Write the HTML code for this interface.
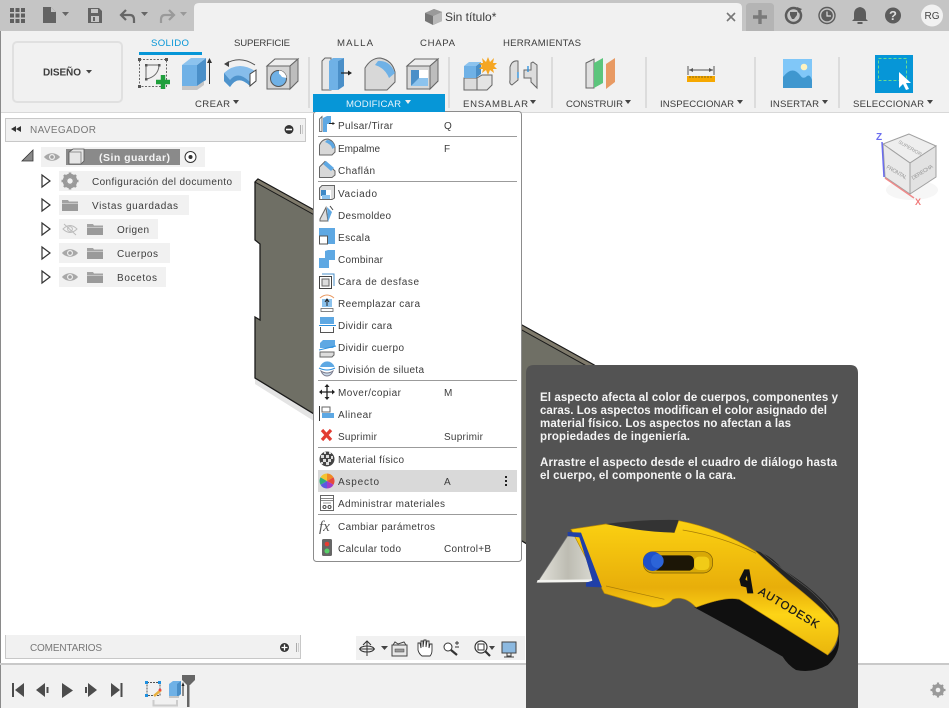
<!DOCTYPE html>
<html><head><meta charset="utf-8"><title>Sin título</title>
<style>
html,body{margin:0;padding:0;background:#fff;width:949px;height:708px;overflow:hidden}
svg{display:block;font-family:"Liberation Sans",sans-serif}
.t{font-size:10px;fill:#3c3c3c}
.r{font-size:9.6px;fill:#3c3c3c}
.w{font-size:11.5px;font-weight:bold;fill:#f4f4f4}
</style></head><body>
<svg width="949" height="708" viewBox="0 0 949 708" xmlns="http://www.w3.org/2000/svg">
<defs>
<linearGradient id="bl" x1="0" x2="1" y1="0" y2="0"><stop offset="0" stop-color="#e4e3dc"/><stop offset=".55" stop-color="#bdbcb2"/><stop offset="1" stop-color="#d8d8d0"/></linearGradient>
<linearGradient id="yl" x1="0" x2="0" y1="0" y2="1"><stop offset="0" stop-color="#fbd112"/><stop offset=".5" stop-color="#e8ae0a"/><stop offset=".7" stop-color="#fdd416"/><stop offset="1" stop-color="#e9b50c"/></linearGradient>
<symbol id="eye" viewBox="0 0 18 10" overflow="visible"><path d="M1 5C5 0 13 0 17 5C13 10 5 10 1 5Z" fill="#a8a8a8"/><circle cx="9" cy="5" r="3" fill="#f0f0f0"/><circle cx="9" cy="5" r="1.8" fill="#a0a0a0"/></symbol>
<symbol id="fold" viewBox="0 0 16 12" overflow="visible"><path d="M0 1H6L7 2.500H16V4H0Z" fill="#a3a3a3"/><path d="M0 4.500H16V12H0Z" fill="#9a9a9a"/></symbol>
<symbol id="tri" viewBox="0 0 10 14" overflow="visible"><path d="M1 1L9 7L1 13Z" fill="#fff" stroke="#333" stroke-width="1.200"/></symbol>
</defs>

<!-- base -->
<rect width="949" height="708" fill="#fff"/>
<rect x="0" y="0" width="1" height="708" fill="#8a8a8a"/>
<rect x="0" y="0" width="949" height="31" fill="#c5c5c5"/>
<path d="M194 31V8Q194 3 199 3H737Q742 3 742 8V31Z" fill="#f1f1f1"/>
<path d="M746 31V7Q746 3 750 3H770Q774 3 774 7V31Z" fill="#b4b4b4"/>
<rect x="1" y="31" width="948" height="81" fill="#f1f1f1"/>
<rect x="1" y="112" width="948" height="1" fill="#d8d8d8"/>

<!-- top bar icons -->
<g fill="#5f5f5f"><rect x="10" y="8" width="4" height="4"/><rect x="15.500" y="8" width="4" height="4"/><rect x="21" y="8" width="4" height="4"/><rect x="10" y="13.500" width="4" height="4"/><rect x="15.500" y="13.500" width="4" height="4"/><rect x="21" y="13.500" width="4" height="4"/><rect x="10" y="19" width="4" height="4"/><rect x="15.500" y="19" width="4" height="4"/><rect x="21" y="19" width="4" height="4"/></g>
<path d="M43 7H51L56 12V23H43Z" fill="#636363"/><path d="M51 7V12H56Z" fill="#c5c5c5"/>
<path d="M62 12H69L65.500 16Z" fill="#666"/>
<path d="M88 8H99L102 11V23H88Z" fill="#636363"/><rect x="91" y="9" width="7" height="4" fill="#c5c5c5"/><rect x="91" y="16" width="8" height="6" fill="#c5c5c5"/><rect x="93" y="17" width="2" height="4" fill="#636363"/>
<path d="M121 15H130Q134 15 134 20V23M126 10L121 15L126 20" fill="none" stroke="#666" stroke-width="2.200"/>
<path d="M141 12H148L144.500 16Z" fill="#666"/>
<path d="M174 15H165Q161 15 161 20V23M169 10L174 15L169 20" fill="none" stroke="#9a9a9a" stroke-width="2.200"/>
<path d="M180 12H187L183.500 16Z" fill="#999"/>
<!-- file title -->
<path d="M425 13L434 9L442 12V21L433 25L425 21Z" fill="#757575"/><path d="M425 13L433 16L442 12L434 9Z" fill="#9a9a9a"/><path d="M433 16V25L442 21V12Z" fill="#b9b9b9"/>
<text x="445" y="21" font-size="12" fill="#3c3c3c">Sin título*</text>
<path d="M727 13L735 21M735 13L727 21" stroke="#777" stroke-width="1.600"/>
<path d="M760 10V24M753 17H767" stroke="#7a7a7a" stroke-width="3.400"/>
<circle cx="793.500" cy="15.500" r="7.500" fill="none" stroke="#5c5c5c" stroke-width="2.500"/><path d="M790 12H797V15L794 19H792L790 15Z" fill="#5c5c5c"/><path d="M797 7L802 9L798 13Z" fill="#5c5c5c"/>
<circle cx="827" cy="15.500" r="8" fill="none" stroke="#5c5c5c" stroke-width="1.400"/><circle cx="827" cy="15.500" r="5.800" fill="#5c5c5c"/><path d="M827 11.500V16H831" fill="none" stroke="#ddd" stroke-width="1.200"/>
<path d="M860 7Q854 8 854 14V19L852 21H868L866 19V14Q866 8 860 7Z" fill="#5c5c5c"/><rect x="857.500" y="22" width="5" height="2" fill="#5c5c5c"/>
<circle cx="893" cy="15.500" r="8" fill="#5c5c5c"/><text x="893" y="20" font-size="13" font-weight="bold" fill="#ddd" text-anchor="middle">?</text>
<circle cx="932" cy="15.500" r="11" fill="#f1f1f1"/><text x="932" y="19" font-size="10" fill="#444" text-anchor="middle">RG</text>

<!-- Design button -->
<rect x="13" y="42" width="109" height="60" rx="4" fill="#f1f1f1" stroke="#e0e0e0" stroke-width="2"/>
<text x="43" y="75.500" font-size="10" font-weight="bold" fill="#3c3c3c" textLength="38">DISEÑO</text>
<path d="M86 70H92L89 73.500Z" fill="#444"/>

<!-- tabs -->
<text x="151" y="46" class="r" style="fill:#0696d7" textLength="38">SOLIDO</text>
<rect x="139" y="52" width="63" height="3" fill="#0696d7"/>
<text x="234" y="46" class="r" textLength="56">SUPERFICIE</text>
<text x="337" y="46" class="r" textLength="36">MALLA</text>
<text x="420" y="46" class="r" textLength="35">CHAPA</text>
<text x="503" y="46" class="r" textLength="78">HERRAMIENTAS</text>

<!-- separators -->
<g fill="#dcdcdc"><rect x="308" y="57" width="2" height="51"/><rect x="448" y="57" width="2" height="51"/><rect x="551" y="57" width="2" height="51"/><rect x="645" y="57" width="2" height="51"/><rect x="754" y="57" width="2" height="51"/><rect x="838" y="57" width="2" height="51"/></g>

<!-- section labels -->
<text x="195" y="107" class="r" textLength="35">CREAR</text><path d="M233 100H239L236 104Z" fill="#444"/>
<rect x="313" y="94" width="132" height="17" fill="#0696d7"/>
<text x="346" y="107" font-size="9.600" fill="#e8f4fb" textLength="55">MODIFICAR</text><path d="M405 100H411L408 104Z" fill="#eee"/>
<text x="463" y="107" class="r" textLength="65">ENSAMBLAR</text><path d="M530 100H536L533 104Z" fill="#444"/>
<text x="566" y="107" class="r" textLength="57">CONSTRUIR</text><path d="M625 100H631L628 104Z" fill="#444"/>
<text x="660" y="107" class="r" textLength="74">INSPECCIONAR</text><path d="M737 100H743L740 104Z" fill="#444"/>
<text x="770" y="107" class="r" textLength="49">INSERTAR</text><path d="M822 100H828L825 104Z" fill="#444"/>
<text x="853" y="107" class="r" textLength="71">SELECCIONAR</text><path d="M927 100H933L930 104Z" fill="#444"/>

<!-- CREAR icons -->
<rect x="139.500" y="59.500" width="27" height="27" fill="none" stroke="#666" stroke-dasharray="2 1.500"/>
<g fill="#555"><rect x="138" y="58" width="3" height="3"/><rect x="165" y="58" width="3" height="3"/><rect x="138" y="85" width="3" height="3"/><rect x="145" y="64" width="2.500" height="2.500"/><rect x="158" y="64" width="2.500" height="2.500"/><rect x="145" y="78" width="2.500" height="2.500"/></g>
<path d="M146 66V79M147 65H159M147 79Q158 76 159 66" fill="none" stroke="#666"/>
<path d="M156 82H170M163 75V89" stroke="#1f9f3c" stroke-width="4.500"/>
<path d="M182 65H197V86H182Z" fill="#6fb1e6"/><path d="M197 65L206 58V80L197 86Z" fill="#4a8fc8"/><path d="M182 65L191 58H206L197 65Z" fill="#8cc3ee"/>
<path d="M182 86H197L204 81V85L197 90H182Z" fill="#c6c6c6"/>
<path d="M209.500 84V61" stroke="#333"/><path d="M207 63L209.500 58L212 63Z" fill="#333"/>
<path d="M225 64Q240 55 255 65" fill="none" stroke="#555" stroke-width="1"/><path d="M224 64L229 61L229 67Z" fill="#444"/>
<path d="M224 73Q238 60 255 71L250 86Q238 74 230 87L224 81Z" fill="#86bdeb"/>
<path d="M224 73V81L230 87Q238 74 250 86V82Q238 70 230 80Z" fill="#4e93cc"/>
<path d="M250 74L256 70V81L250 86Z" fill="#fff" stroke="#444"/>
<path d="M267 66L275 59H298V81L290 89H267Z" fill="#d4d4d4" stroke="#666"/><path d="M267 66L275 59H298L290 66Z" fill="#eee" stroke="#666"/><path d="M290 66V89L298 81V59Z" fill="#bdbdbd" stroke="#666"/>
<circle cx="278.500" cy="78.500" r="8" fill="#6fb1e6" stroke="#555"/><path d="M279 70.500A8 8 0 0 1 286.500 78L282 77Q280 74 279 74Z" fill="#fff"/>

<!-- MODIFICAR icons -->
<path d="M322 61L325 58H331V90H322Z" fill="#e8e8e8" stroke="#666"/>
<path d="M329 61L333 58H344L338 61V90H329Z" fill="#6fb1e6"/><path d="M338 61L344 58V86L338 90Z" fill="#4a8fc8"/>
<path d="M341 73H349" stroke="#222" stroke-width="1.200"/><path d="M348 70.500L352 73L348 75.500Z" fill="#222"/>
<path d="M365 68Q371 58 380 58Q392 60 395 72V82L387 90H365Z" fill="#d8d8d8" stroke="#666"/>
<path d="M378 61Q390 60 395 73L389 78Q385 68 375 65Z" fill="#6fb1e6"/>
<path d="M407 66L415 59H438V81L430 89H407Z" fill="#d8d8d8" stroke="#666"/><path d="M407 66L415 59H438L430 66Z" fill="#eee" stroke="#666"/><path d="M430 66V89L438 81V59Z" fill="#bdbdbd" stroke="#666"/>
<rect x="411" y="70" width="17" height="16" fill="#fff"/><path d="M411 70H419V80L411 86Z" fill="#4a8fc8"/><path d="M419 78H428V86H411Z" fill="#8cc3ee"/>

<!-- ENSAMBLAR -->
<path d="M464 78H477V90H464Z" fill="#dcdcdc" stroke="#666"/><path d="M477 78L482 75H492V85L487 90H477Z" fill="#e4e4e4" stroke="#666"/>
<path d="M464 66H476V78H464Z" fill="#6fb1e6"/><path d="M476 66L481 62V74L476 78Z" fill="#4a8fc8"/><path d="M464 66L469 62H481L476 66Z" fill="#8cc3ee"/>
<path d="M488 57L490 62L494 58L493 63L497 63L494 66L497 69L493 69L494 73L490 70L488 75L486 70L482 73L483 69L479 69L482 66L479 63L483 63L482 58L486 62Z" fill="#f5a623"/>
<path d="M510 67Q512 60 518 61V80L512 85Q509 84 510 80Z" fill="#ddd" stroke="#666"/>
<path d="M533 62L537 65V88L531 82V78H524V70H531V63Z" fill="#ddd" stroke="#666"/>
<path d="M518 72V78M528 66V72" stroke="#2a8fdd" stroke-width="1.300"/>

<!-- CONSTRUIR -->
<path d="M586 63L594 59V88H586Z" fill="#e0e0e0" stroke="#666"/>
<path d="M594 63L603 58V83L594 88Z" fill="#5cc57c"/>
<path d="M606 64L615 58V82L606 89Z" fill="#e89a63"/>

<!-- INSPECCIONAR -->
<path d="M688 66V75M714 66V75" stroke="#555"/><path d="M689 70H713" stroke="#555"/><path d="M689 70L693 68V72ZM713 70L709 68V72Z" fill="#555"/>
<rect x="687" y="76" width="28" height="6" fill="#f6a800"/>
<path d="M690 76V78M693 76V78M696 76V78M699 76V78M702 76V78M705 76V78M708 76V78M711 76V78" stroke="#8a6a10"/>

<!-- INSERTAR -->
<rect x="783" y="59" width="29" height="29" fill="#80c7f8"/>
<circle cx="804" cy="67" r="3.300" fill="#fdf3c0"/>
<path d="M783 88V77Q792 65 800 75Q803 80 807 76Q810 74 812 80V88Z" fill="#3f97cf"/>

<!-- SELECCIONAR -->
<rect x="875" y="55" width="38" height="38" fill="#0696d7"/>
<rect x="878.500" y="58.500" width="28" height="22" fill="none" stroke="#69dd90" stroke-dasharray="3 2"/>
<path d="M899 72V88L903 84L906 90L909 89L906 83L911 83Z" fill="#fff"/>

<!-- Geometry -->
<path d="M255 378L522 541V552L255 384Z" fill="#e4e4e4"/>
<path d="M258 179L255 182V240L260 244V320L255 317V378L540 552L620 400L594 365Z" fill="#6f6f65" stroke="#1a1a1a" stroke-width="1.300"/>
<path d="M258 179L255 182L594 370L596 366Z" fill="#7f7a6b" stroke="#1a1a1a" stroke-width="1"/>

<!-- Navigator -->
<rect x="5.500" y="118.500" width="300" height="23" fill="#f1f1f1" stroke="#c8c8c8"/>
<path d="M11 129L16 126V132ZM16 129L21 126V132Z" fill="#333"/>
<text x="30" y="133" font-size="10" fill="#777" textLength="66">NAVEGADOR</text>
<circle cx="289" cy="129.500" r="4.500" fill="#333"/><rect x="286" y="128.700" width="6" height="1.600" fill="#fff"/>
<rect x="300" y="125" width="1" height="9" fill="#aaa"/><rect x="302" y="125" width="1" height="9" fill="#ccc"/>

<path d="M22 161H33V150Z" fill="#8a8a8a"/><path d="M33 150L22 161H33Z" fill="none" stroke="#333" stroke-width=".8"/>
<rect x="41" y="147" width="164" height="20" fill="#f1f1f1"/>
<rect x="66" y="149" width="114" height="16" fill="#8a8a8a"/>
<use href="#eye" x="43" y="152" width="18" height="10"/>
<path d="M69 152L73 149H84V161L81 164H69Z" fill="#e6e6e6" stroke="#555" stroke-width=".8"/><path d="M69 152H81V164" fill="none" stroke="#777" stroke-width=".8"/>
<text x="99" y="161" font-size="10.500" font-weight="bold" fill="#f4f4f4" textLength="71">(Sin guardar)</text>
<circle cx="190.500" cy="157" r="5.500" fill="#fff" stroke="#333"/><circle cx="190.500" cy="157" r="2" fill="#333"/>

<rect x="59" y="171" width="182" height="20" fill="#f1f1f1"/>
<rect x="59" y="195" width="130" height="20" fill="#f1f1f1"/>
<rect x="59" y="219" width="99" height="20" fill="#f1f1f1"/>
<rect x="59" y="243" width="111" height="20" fill="#f1f1f1"/>
<rect x="59" y="267" width="107" height="20" fill="#f1f1f1"/>
<use href="#tri" x="41" y="174" width="10" height="14"/>
<use href="#tri" x="41" y="198" width="10" height="14"/>
<use href="#tri" x="41" y="222" width="10" height="14"/>
<use href="#tri" x="41" y="246" width="10" height="14"/>
<use href="#tri" x="41" y="270" width="10" height="14"/>
<circle cx="70" cy="181" r="5.500" fill="none" stroke="#9a9a9a" stroke-width="3.500"/>
<path d="M70 172.500V189.500M61.500 181H78.500M64 175L76 187M76 175L64 187" stroke="#9a9a9a" stroke-width="2.600"/>
<circle cx="70" cy="181" r="2.700" fill="#f1f1f1"/>
<use href="#fold" x="62" y="199" width="16" height="12"/>
<text x="92" y="185" class="t" textLength="140">Configuración del documento</text>
<text x="92" y="209" class="t" textLength="86">Vistas guardadas</text>
<path d="M63 229Q70 222 77 229Q70 236 63 229Z" fill="none" stroke="#bbb"/><circle cx="70" cy="229" r="2.400" fill="none" stroke="#bbb"/><path d="M64 224L76 235" stroke="#bbb"/>
<use href="#fold" x="87" y="223" width="16" height="12"/>
<text x="117" y="233" class="t" textLength="32">Origen</text>
<use href="#eye" x="61" y="248" width="18" height="10"/><use href="#fold" x="87" y="247" width="16" height="12"/>
<text x="117" y="257" class="t" textLength="41">Cuerpos</text>
<use href="#eye" x="61" y="272" width="18" height="10"/><use href="#fold" x="87" y="271" width="16" height="12"/>
<text x="117" y="281" class="t" textLength="40">Bocetos</text>

<!-- View cube -->
<ellipse cx="912" cy="190" rx="26" ry="10" fill="#f6f6f6"/>
<path d="M909 134L883 144L910 163L936 146Z" fill="#eee" stroke="#a0a0a0"/>
<path d="M883 144L885 177L910 194V163Z" fill="#e9e9e9" stroke="#a0a0a0"/>
<path d="M910 163V194L936 177V146Z" fill="#e2e2e2" stroke="#a0a0a0"/>
<path d="M882 142L884 177" stroke="#6a6cf0" stroke-width="1.500"/>
<path d="M885 178L914 198" stroke="#f08a8a" stroke-width="1.500"/>
<text x="876" y="140" font-size="10" font-weight="bold" fill="#6a6cf0">Z</text>
<text x="915" y="205" font-size="9" font-weight="bold" fill="#f07a7a">X</text>
<text font-size="5.500" fill="#999" transform="translate(886 168) rotate(30)" textLength="23">FRONTAL</text>
<text font-size="5.500" fill="#999" transform="translate(913 180) rotate(-32)" textLength="24">DERECHA</text>
<text font-size="5" fill="#999" transform="translate(898 143) rotate(30)" textLength="26">SUPERIOR</text>

<!-- Comments -->
<rect x="5" y="635" width="296" height="24" fill="#f1f1f1"/>
<path d="M5.500 635V658.500H300.500V635" fill="none" stroke="#c8c8c8"/>
<text x="30" y="651" font-size="10" fill="#777" textLength="72">COMENTARIOS</text>
<circle cx="284.500" cy="647.500" r="4.500" fill="#333"/><path d="M281.500 647.500H287.500M284.500 644.500V650.500" stroke="#fff" stroke-width="1.300"/>
<rect x="296" y="643" width="1" height="9" fill="#aaa"/><rect x="298" y="643" width="1" height="9" fill="#ccc"/>

<!-- Nav toolbar -->
<rect x="356" y="636" width="169" height="24" fill="#f1f1f1"/>
<ellipse cx="367" cy="649" rx="7" ry="3" fill="none" stroke="#333"/><path d="M367 641V656M363 645L367 641L371 645M359 649H375" fill="none" stroke="#333"/>
<path d="M381 646H388L384.500 650Z" fill="#444"/>
<rect x="392" y="645" width="15" height="11" fill="#e8e8e8" stroke="#444"/><rect x="395" y="649" width="9" height="3" fill="#999" stroke="#444" stroke-width=".5"/><path d="M393 645L395 642L398 644L404 642L406 645" fill="none" stroke="#444"/>
<path d="M422 656Q419 654 418 650V643L420 643L421 648V641H423V647L424 640H426V647L427 641H429V648L430 644H432V650Q432 654 430 656Z" fill="#fff" stroke="#333" stroke-width=".9"/>
<circle cx="448" cy="647" r="4" fill="#fff" stroke="#333"/><path d="M451 650L457 655" stroke="#333" stroke-width="2.200"/><path d="M455 643H459M457 641V645M455 647H459" stroke="#333" stroke-width=".9"/>
<circle cx="481" cy="647" r="6" fill="#fff" stroke="#333" stroke-width="1.200"/><rect x="478" y="644" width="6" height="6" fill="none" stroke="#333"/><path d="M485 651L490 656" stroke="#333" stroke-width="2.200"/>
<path d="M489 646H495L492 650Z" fill="#444"/>
<rect x="502" y="642" width="14" height="11" fill="#8cb9e0" stroke="#444"/><path d="M507 653V656H511V653M504 657H514" fill="none" stroke="#444"/>

<!-- Timeline -->
<rect x="0" y="663" width="949" height="2" fill="#c9c9c9"/>
<rect x="1" y="665" width="948" height="43" fill="#f1f1f1"/>
<g fill="#4c4c4c">
<rect x="12" y="683" width="2" height="14"/><path d="M24 683V697L15 690Z"/>
<path d="M45 683V697L36 690Z"/><rect x="46.500" y="687" width="2" height="6"/>
<path d="M62 683V698L73 690.500Z"/>
<rect x="85" y="687" width="2" height="6"/><path d="M88 683V697L97 690Z"/>
<path d="M111 683V697L120 690Z"/><rect x="120.500" y="683" width="2" height="14"/>
</g>
<rect x="147" y="682.500" width="13" height="13" fill="none" stroke="#555" stroke-dasharray="2 1"/>
<g fill="#1e90e0"><rect x="145" y="681" width="3" height="3"/><rect x="158" y="681" width="3" height="3"/><rect x="145" y="694" width="3" height="3"/></g>
<path d="M154 696L161 690" stroke="#e8b040" stroke-width="2.500"/><circle cx="160" cy="690" r="1.400" fill="#ee4444"/>
<path d="M169 684L173 681H181V694L178 697H169Z" fill="#6fb1e6"/><path d="M177 684L181 681V694L177 697Z" fill="#4a8fc8"/>
<rect x="169" y="696" width="10" height="2" fill="#c6c6c6"/>
<path d="M183 696V684" stroke="#222"/><path d="M181.500 686L183 682L184.500 686Z" fill="#222"/>
<path d="M153.500 700V705.500H177V700" fill="none" stroke="#ccc" stroke-width="2"/>
<path d="M182 675H195V680L190 685H187L182 680Z" fill="#666"/><rect x="187" y="680" width="2.500" height="27" fill="#666"/>
<circle cx="938" cy="690" r="4.500" fill="none" stroke="#9a9a9a" stroke-width="3"/>
<path d="M938 682.500V697.500M930.500 690H945.500M933 685L943 695M943 685L933 695" stroke="#9a9a9a" stroke-width="2.200"/>
<circle cx="938" cy="690" r="2.300" fill="#f1f1f1"/>

<!-- Menu -->
<rect x="313.500" y="111.500" width="208" height="450" rx="3" fill="#fff" stroke="#8c8c8c"/>
<rect x="313" y="110" width="132" height="2" fill="#0696d7"/>
<g fill="#9b9b9b"><rect x="318" y="136" width="199" height="1"/><rect x="318" y="181" width="199" height="1"/><rect x="318" y="380" width="199" height="1"/><rect x="318" y="447" width="199" height="1"/><rect x="318" y="514" width="199" height="1"/></g>
<rect x="318" y="470" width="199" height="22" fill="#d9d9d9"/>

<g>
<text x="338" y="129" class="t" textLength="55">Pulsar/Tirar</text><text x="444" y="129" class="t">Q</text>
<text x="338" y="152" class="t" textLength="42">Empalme</text><text x="444" y="152" class="t">F</text>
<text x="338" y="174" class="t" textLength="37">Chaflán</text>
<text x="338" y="197" class="t" textLength="39">Vaciado</text>
<text x="338" y="219" class="t" textLength="53">Desmoldeo</text>
<text x="338" y="241" class="t" textLength="32">Escala</text>
<text x="338" y="263" class="t" textLength="45">Combinar</text>
<text x="338" y="285" class="t" textLength="81">Cara de desfase</text>
<text x="338" y="307" class="t" textLength="82">Reemplazar cara</text>
<text x="338" y="329" class="t" textLength="54">Dividir cara</text>
<text x="338" y="351" class="t" textLength="66">Dividir cuerpo</text>
<text x="338" y="373" class="t" textLength="86">División de silueta</text>
<text x="338" y="396" class="t" textLength="63">Mover/copiar</text><text x="444" y="396" class="t">M</text>
<text x="338" y="418" class="t" textLength="34">Alinear</text>
<text x="338" y="440" class="t" textLength="39">Suprimir</text><text x="444" y="440" class="t" textLength="39">Suprimir</text>
<text x="338" y="463" class="t" textLength="66">Material físico</text>
<text x="338" y="485" class="t" textLength="41">Aspecto</text><text x="444" y="485" class="t">A</text>
<text x="338" y="507" class="t" textLength="107">Administrar materiales</text>
<text x="338" y="530" class="t" textLength="97">Cambiar parámetros</text>
<text x="338" y="552" class="t" textLength="63">Calcular todo</text><text x="444" y="552" class="t" textLength="47">Control+B</text>
</g>
<g fill="#222"><rect x="505" y="476" width="2" height="2"/><rect x="505" y="480" width="2" height="2"/><rect x="505" y="484" width="2" height="2"/></g>

<!-- Menu icons -->
<path d="M319.500 119L322 116.500V131.500H319.500Z" fill="#eee" stroke="#555" stroke-width=".8"/><path d="M323 118L327 116H331V124H327V132H323Z" fill="#5ea8e3"/><path d="M329 123.500H333" stroke="#222"/><path d="M332.500 122L335 123.500L332.500 125Z" fill="#222"/>
<path d="M319.500 145Q322 139 328 139Q334 141 335 147V152L332 155H319.500Z" fill="#d8d8d8" stroke="#666"/><path d="M327 140Q333 140 335 147L332.500 149Q331 144 325 142Z" fill="#5ea8e3"/>
<path d="M319.500 167L325 161.500L335 171V175L332 177.500H319.500Z" fill="#d8d8d8" stroke="#666"/><path d="M326 161L334 168L331 171L323 164Z" fill="#5ea8e3"/>
<path d="M319.500 188L322 185.500H334.500V198L332 199.500H319.500Z" fill="#ddd" stroke="#666"/><rect x="321" y="190" width="10" height="9" fill="#fff"/><rect x="321" y="190" width="5" height="6" fill="#3e89c6"/><rect x="322" y="195" width="8" height="4" fill="#8cc3ee"/>
<path d="M320 219L326 207.500L328 221H320Z" fill="#ddd" stroke="#666"/><path d="M327 207L332 212L328 222Z" fill="#5ea8e3"/><path d="M330 206L333 210" stroke="#444"/>
<rect x="319" y="228" width="16" height="16" fill="#5ea8e3"/><rect x="319.500" y="236" width="8" height="8" fill="#fff" stroke="#555"/>
<path d="M325 251L328 250H335V260H329V268H319V258H325Z" fill="#5ea8e3"/>
<rect x="319.500" y="276.500" width="12" height="12" fill="#fff" stroke="#444"/><rect x="322" y="279" width="7" height="7" fill="#ddd" stroke="#666"/><path d="M322 274H334V286" fill="none" stroke="#4a8fc8" stroke-width="1"/>
<path d="M320 298Q327 292 334 298" fill="none" stroke="#e8975f"/><rect x="322" y="299" width="10" height="8" fill="#8cc3ee"/><path d="M327 306V300M325 302L327 299L329 302" fill="none" stroke="#222"/><rect x="321" y="308.500" width="12" height="3" fill="#fff" stroke="#666" stroke-width=".8"/>
<rect x="320" y="317" width="14" height="7" fill="#5ea8e3"/><path d="M319 325.500H336" stroke="#2a8fdd"/><path d="M320.500 327V332.500H333.500V327" fill="#fff" stroke="#555"/>
<path d="M320 343L323 340H335V346L333 348H320Z" fill="#5ea8e3"/><path d="M319 350L336 346" stroke="#2a8fdd"/><path d="M320 352H334V355L332 357H320Z" fill="#ddd" stroke="#666"/>
<path d="M320 367A7.500 7.500 0 0 1 334.500 367Z" fill="#5ea8e3"/><path d="M319 368Q327 372 335 368" fill="none" stroke="#2a8fdd"/><path d="M321 371Q327 375 333 371Q331 376 327 376Q323 376 321 371Z" fill="#c8d8e8" stroke="#778"/>
<path d="M327 385V399M320 392H334" stroke="#222" stroke-width="1.300"/><path d="M327 384L329.500 387H324.500ZM327 400L329.500 397H324.500ZM319 392L322 389.500V394.500ZM335 392L332 389.500V394.500Z" fill="#222"/>
<path d="M319.500 406V421" stroke="#333"/><rect x="322" y="407" width="8" height="5" fill="#fff" stroke="#666"/><rect x="322" y="413" width="12" height="5" fill="#5ea8e3"/>
<path d="M322 430L331 440M331 430L322 440" stroke="#e23c32" stroke-width="3.200"/>
<circle cx="327" cy="459" r="7.500" fill="#444"/><g fill="#ddd"><rect x="321" y="455" width="3" height="3"/><rect x="326" y="455" width="3" height="3"/><rect x="331" y="456" width="2" height="3"/><rect x="323" y="459" width="3" height="3"/><rect x="328" y="459" width="3" height="3"/><rect x="321" y="462" width="2" height="2"/><rect x="326" y="462" width="3" height="3"/><rect x="324" y="452" width="2" height="2"/><rect x="329" y="452" width="2" height="2"/></g>
<path d="M327 481V473.500A7.500 7.500 0 0 1 333.500 477.300Z" fill="#f08a24"/><path d="M327 481L333.500 477.300A7.500 7.500 0 0 1 333.500 484.700Z" fill="#e54a3c"/><path d="M327 481L333.500 484.700A7.500 7.500 0 0 1 327 488.500Z" fill="#a03cc8"/><path d="M327 481V488.500A7.500 7.500 0 0 1 320.500 484.700Z" fill="#5a5ae0"/><path d="M327 481L320.500 484.700A7.500 7.500 0 0 1 320.500 477.300Z" fill="#2fae7a"/><path d="M327 481L320.500 477.300A7.500 7.500 0 0 1 327 473.500Z" fill="#f4c430"/>
<rect x="320.500" y="495.500" width="13" height="15" fill="#fff" stroke="#666"/><path d="M321 498.500H333M321 500.500H333" stroke="#888"/><circle cx="324.500" cy="507" r="1.500" fill="none" stroke="#444"/><circle cx="329.500" cy="507" r="1.500" fill="none" stroke="#444"/><path d="M323 503H331" stroke="#999"/>
<text x="319" y="531" font-family="Liberation Serif,serif" font-style="italic" font-size="15" fill="#555">fx</text>
<rect x="322" y="539" width="10" height="17" rx="1.500" fill="#666"/><circle cx="327" cy="544" r="2.300" fill="#e83c32"/><circle cx="327" cy="551" r="2.500" fill="#58d068"/>

<!-- Tooltip -->
<path d="M534 365H850Q858 365 858 373V708H526V373Q526 365 534 365Z" fill="#535353"/>
<text x="540" y="401" class="w" textLength="298">El aspecto afecta al color de cuerpos, componentes y</text>
<text x="540" y="414" class="w" textLength="287">caras. Los aspectos modifican el color asignado del</text>
<text x="540" y="427" class="w" textLength="251">material físico. Los aspectos no afectan a las</text>
<text x="540" y="440" class="w" textLength="150">propiedades de ingeniería.</text>
<text x="540" y="466" class="w" textLength="297">Arrastre el aspecto desde el cuadro de diálogo hasta</text>
<text x="540" y="479" class="w" textLength="196">el cuerpo, el componente o la cara.</text>

<!-- Knife -->
<svg x="526" y="510" width="330" height="198" viewBox="0 0 990 594">
<path d="M125 78L162 80L200 212L35 216Z" fill="url(#bl)" stroke="#777" stroke-width="2"/>
<path d="M35 210L198 208V216L32 218Z" fill="#f4f4f0"/>
<path d="M690 122Q735 135 770 178Q880 245 935 325Q945 350 938 385L905 435L700 240Z" fill="#252525"/>
<path d="M700 122Q770 180 845 235Q910 290 935 345" fill="none" stroke="#555" stroke-width="2"/>
<path d="M505 292Q600 250 660 275L905 435Q930 420 938 380Q945 430 905 465Q860 490 810 480Q785 465 770 440Q650 370 505 292Z" fill="#101010"/>
<path d="M135 58L240 42L445 68L458 32Q580 55 690 125L790 215Q880 285 935 345Q945 390 905 435L640 268Q600 258 510 292Q475 255 440 268Q420 292 380 292L235 250Z" fill="url(#yl)" stroke="#b98a08" stroke-width="2"/>
<path d="M240 42Q340 28 458 30L445 68Q340 65 240 42Z" fill="#333"/>
<path d="M125 66L165 68L225 225L228 232L180 230V218L200 212L160 82L125 78Z" fill="#1f3fa8"/>
<path d="M240 228L415 268M470 60Q590 80 690 130" fill="none" stroke="#a87d08" stroke-width="2"/>
<rect x="352" y="125" width="208" height="64" rx="28" fill="#d8a806" stroke="#7a5c06" stroke-width="2"/>
<rect x="380" y="136" width="124" height="46" rx="16" fill="#1c1606"/>
<rect x="505" y="140" width="45" height="40" rx="14" fill="#f1cb17"/>
<circle cx="380" cy="154" r="29" fill="#1e50c8"/><ellipse cx="394" cy="153" rx="19" ry="21" fill="#2c64d8"/>
<path fill-rule="evenodd" d="M655 178H670L682 250H664L661 232L645 228L640 208ZM658 208L663 197L664 213Z" fill="#111"/>
<text transform="translate(695 250) rotate(31)" font-size="34" stroke="#191919" stroke-width=".8" fill="#191919" textLength="205">AUTODESK</text>
</svg>
</svg>
</body></html>
